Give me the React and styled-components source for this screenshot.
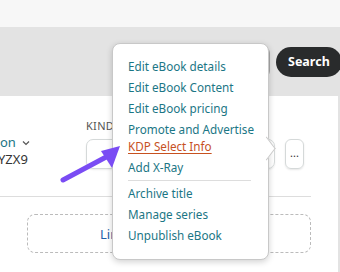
import React from 'react';
import styled, { createGlobalStyle } from 'styled-components';

const GlobalStyle = createGlobalStyle`
  body {
    margin: 0;
    font-family: "Noto Sans", "Open Sans", Arial, sans-serif;
  }
`;

const Page = styled.div`
  position: relative;
  width: 340px;
  height: 272px;
  overflow: hidden;
  background: #f7f7f7;
`;

const TopStrip = styled.div`
  height: 27px;
  background: #f7f7f7;
`;

const SearchBand = styled.div`
  height: 69px;
  background: #e3e3e3;
  display: flex;
  align-items: center;
  justify-content: flex-end;
  gap: 6px;
  margin-right: -2px;
`;

const SearchInput = styled.div`
  width: 120px;
  height: 28px;
  background: #fff;
  border: 1px solid #a6a6a6;
  border-radius: 6px;
`;

const SearchButton = styled.button`
  width: 66px;
  height: 30px;
  border: none;
  border-radius: 15px;
  background: #292b2c;
  color: #fff;
  font-family: inherit;
  font-weight: 700;
  font-size: 12.5px;
  padding: 0 0 0 12px;
  text-align: left;
`;

const Card = styled.div`
  height: 176px;
  width: 338px;
  background: #fff;
  border-right: 2px solid #e3e3e3;
`;

const TopRow = styled.div`
  display: flex;
  align-items: flex-start;
  height: 101px;
  width: 311px;
  border-bottom: 1px solid #ddd;
  box-sizing: border-box;
`;

const TitleCol = styled.div`
  padding-top: 38px;
  width: 86px;
  display: flex;
  flex-direction: column;
`;

const Format = styled.div`
  color: #1b7685;
  font-size: 13px;
  line-height: 17px;
  display: flex;
  align-items: center;
  gap: 6px;
`;

const Asin = styled.div`
  color: #333;
  font-size: 13px;
  line-height: 17px;
  margin-left: -2px;
`;

const ActionsCol = styled.div`
  padding-top: 23px;
  display: flex;
  flex-direction: column;
  gap: 7px;
`;

const Label = styled.div`
  color: #555;
  font-size: 11px;
  line-height: 13px;
  letter-spacing: 0.3px;
  width: 26px;
  overflow: hidden;
  white-space: nowrap;
`;

const ActionRow = styled.div`
  display: flex;
  gap: 10px;
`;

const SelectBox = styled.div`
  width: 189px;
  height: 30px;
  box-sizing: border-box;
  border: 1px solid #d5d9d9;
  border-radius: 7px;
  box-shadow: 0 1px 2px rgba(0, 0, 0, 0.08);
`;

const MoreButton = styled.div`
  width: 19px;
  height: 30px;
  box-sizing: border-box;
  border: 1px solid #d5d9d9;
  border-radius: 6px;
  box-shadow: 0 1px 2px rgba(0, 0, 0, 0.1);
  display: flex;
  align-items: center;
  justify-content: center;
  color: #333;
  font-size: 11px;
  line-height: 1;
  padding-bottom: 3px;
`;

const DashedBox = styled.div`
  margin: 17px 0 0 27px;
  width: 284px;
  height: 39px;
  box-sizing: border-box;
  border: 1px dashed #bbb;
  border-radius: 8px;
  display: flex;
  align-items: center;
  padding-left: 72px;
`;

const LinkText = styled.span`
  color: #1e5fa8;
  font-size: 13px;
  width: 12px;
  overflow: hidden;
  white-space: nowrap;
`;

const Menu = styled.div`
  position: absolute;
  left: 112px;
  top: 43px;
  width: 157px;
  height: 217px;
  box-sizing: border-box;
  background: #fff;
  border: 1px solid #c8c8c8;
  border-radius: 8px;
  box-shadow: 0 2px 6px rgba(0, 0, 0, 0.18);
  padding: 12px 17px 0 15px;
`;

const Caret = styled.div`
  position: absolute;
  right: -6px;
  top: 97px;
  width: 14px;
  height: 14px;
  background: #fff;
  border-top: 1px solid #c8c8c8;
  border-right: 1px solid #c8c8c8;
  transform: rotate(45deg) skew(8deg, 8deg);
`;

const Item = styled.div`
  color: ${(p) => (p.$active ? '#c7511f' : '#1b7685')};
  text-decoration: ${(p) => (p.$active ? 'underline' : 'none')};
  text-underline-offset: 2px;
  font-size: 11.7px;
  line-height: 21px;
  white-space: nowrap;
  margin-top: ${(p) => p.$shift || 0}px;
`;

const Separator = styled.div`
  height: 1px;
  background: #ddd;
  margin: 1.5px 0 2.5px 0;
`;

const Pointer = styled.svg`
  position: absolute;
  left: 0;
  top: 0;
`;

export default function App() {
  return (
    <Page>
      <GlobalStyle />
      <TopStrip />
      <SearchBand>
        <SearchInput />
        <SearchButton>Search</SearchButton>
      </SearchBand>
      <Card>
        <TopRow>
          <TitleCol>
            <Format>
              on
              <svg width="8" height="6" viewBox="0 0 8 6">
                <path d="M1 1.5 L4 4.5 L7 1.5" fill="none" stroke="#555" strokeWidth="1.2" />
              </svg>
            </Format>
            <Asin>YZX9</Asin>
          </TitleCol>
          <ActionsCol>
            <Label>KINDLE EBOOK ACTIONS</Label>
            <ActionRow>
              <SelectBox />
              <MoreButton>...</MoreButton>
            </ActionRow>
          </ActionsCol>
        </TopRow>
        <DashedBox>
          <LinkText>Link to eBook</LinkText>
        </DashedBox>
      </Card>
      <Menu>
        <Caret />
        <Item>Edit eBook details</Item>
        <Item>Edit eBook Content</Item>
        <Item>Edit eBook pricing</Item>
        <Item>Promote and Advertise</Item>
        <Item $active $shift={-4}>KDP Select Info</Item>
        <Item>Add X-Ray</Item>
        <Separator />
        <Item>Archive title</Item>
        <Item>Manage series</Item>
        <Item>Unpublish eBook</Item>
      </Menu>
      <Pointer width="340" height="272">
        <line x1="63" y1="180" x2="108" y2="156" stroke="#7a4cf4" strokeWidth="5" strokeLinecap="round" />
        <polygon points="120,146 101,151 112,168" fill="#7a4cf4" />
      </Pointer>
    </Page>
  );
}
